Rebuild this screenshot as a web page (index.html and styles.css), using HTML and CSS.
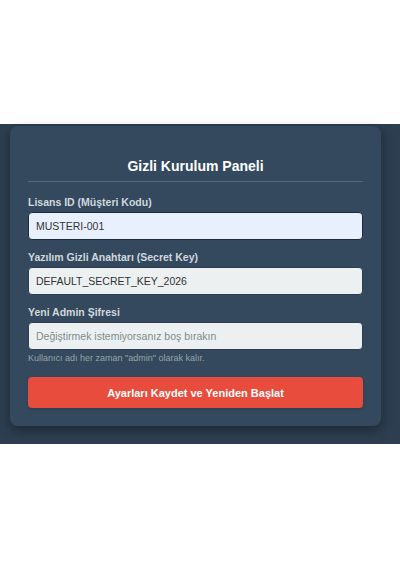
FILE: index.html
```html
<!DOCTYPE html>
<html lang="tr">
<head>
<meta charset="utf-8">
<title>Gizli Kurulum Paneli</title>
<link rel="stylesheet" href="styles.css">
</head>
<body>
<div class="stage">
  <form class="card">
    <h2 class="title">Gizli Kurulum Paneli</h2>
    <div class="field">
      <label class="label">Lisans ID (Müşteri Kodu)</label>
      <input class="input input-auto" type="text" value="MUSTERI-001">
    </div>
    <div class="field">
      <label class="label">Yazılım Gizli Anahtarı (Secret Key)</label>
      <input class="input" type="text" value="DEFAULT_SECRET_KEY_2026">
    </div>
    <div class="field">
      <label class="label">Yeni Admin Şifresi</label>
      <input class="input" type="password" placeholder="Değiştirmek istemiyorsanız boş bırakın">
      <small class="hint">Kullanıcı adı her zaman "admin" olarak kalır.</small>
    </div>
    <button class="btn" type="button">Ayarları Kaydet ve Yeniden Başlat</button>
  </form>
</div>
</body>
</html>
```
FILE: styles.css
```css
html, body {
  margin: 0;
  padding: 0;
  background: #ffffff;
  font-family: "Liberation Sans", Arial, sans-serif;
}
.stage {
  margin-top: 124px;
  height: 320px;
  background: #2c3e50;
  padding: 2px 19px 0 10px;
  box-sizing: border-box;
}
.card {
  background: #34495e;
  border-radius: 8px;
  box-shadow: 0 4px 12px rgba(0, 0, 0, 0.35);
  padding: 32px 18px 18px;
  height: 300px;
  box-sizing: border-box;
  display: flex;
  flex-direction: column;
}
.title {
  margin: 0 0 14px;
  padding-bottom: 7px;
  border-bottom: 1.5px solid #4f6a82;
  color: #ffffff;
  font-size: 14px;
  line-height: 16px;
  font-weight: bold;
  text-align: center;
}
.field {
  display: flex;
  flex-direction: column;
  margin-bottom: 11px;
}
.label {
  color: #d0d7dd;
  font-size: 10.5px;
  line-height: 12px;
  font-weight: bold;
  margin-bottom: 4px;
}
.input {
  height: 28px;
  box-sizing: border-box;
  border: 1px solid #2c3e50;
  border-radius: 4px;
  background: #ecf0f1;
  color: #333333;
  font-family: "Liberation Sans", Arial, sans-serif;
  font-size: 10.5px;
  padding: 0 7px;
  outline: none;
}
.input-auto {
  background: #e8f0fe;
  border-color: #1c2b3a;
}
.input::placeholder {
  color: #7f8c8d;
}
.hint {
  color: #95a5a6;
  font-size: 9px;
  line-height: 10px;
  margin-top: 3px;
}
.btn {
  margin-top: 3px;
  height: 31px;
  border: none;
  border-radius: 4px;
  background: #e74c3c;
  color: #ffffff;
  font-family: "Liberation Sans", Arial, sans-serif;
  font-size: 11px;
  font-weight: bold;
  box-shadow: 0 1px 3px rgba(0,0,0,0.2);
}
```
